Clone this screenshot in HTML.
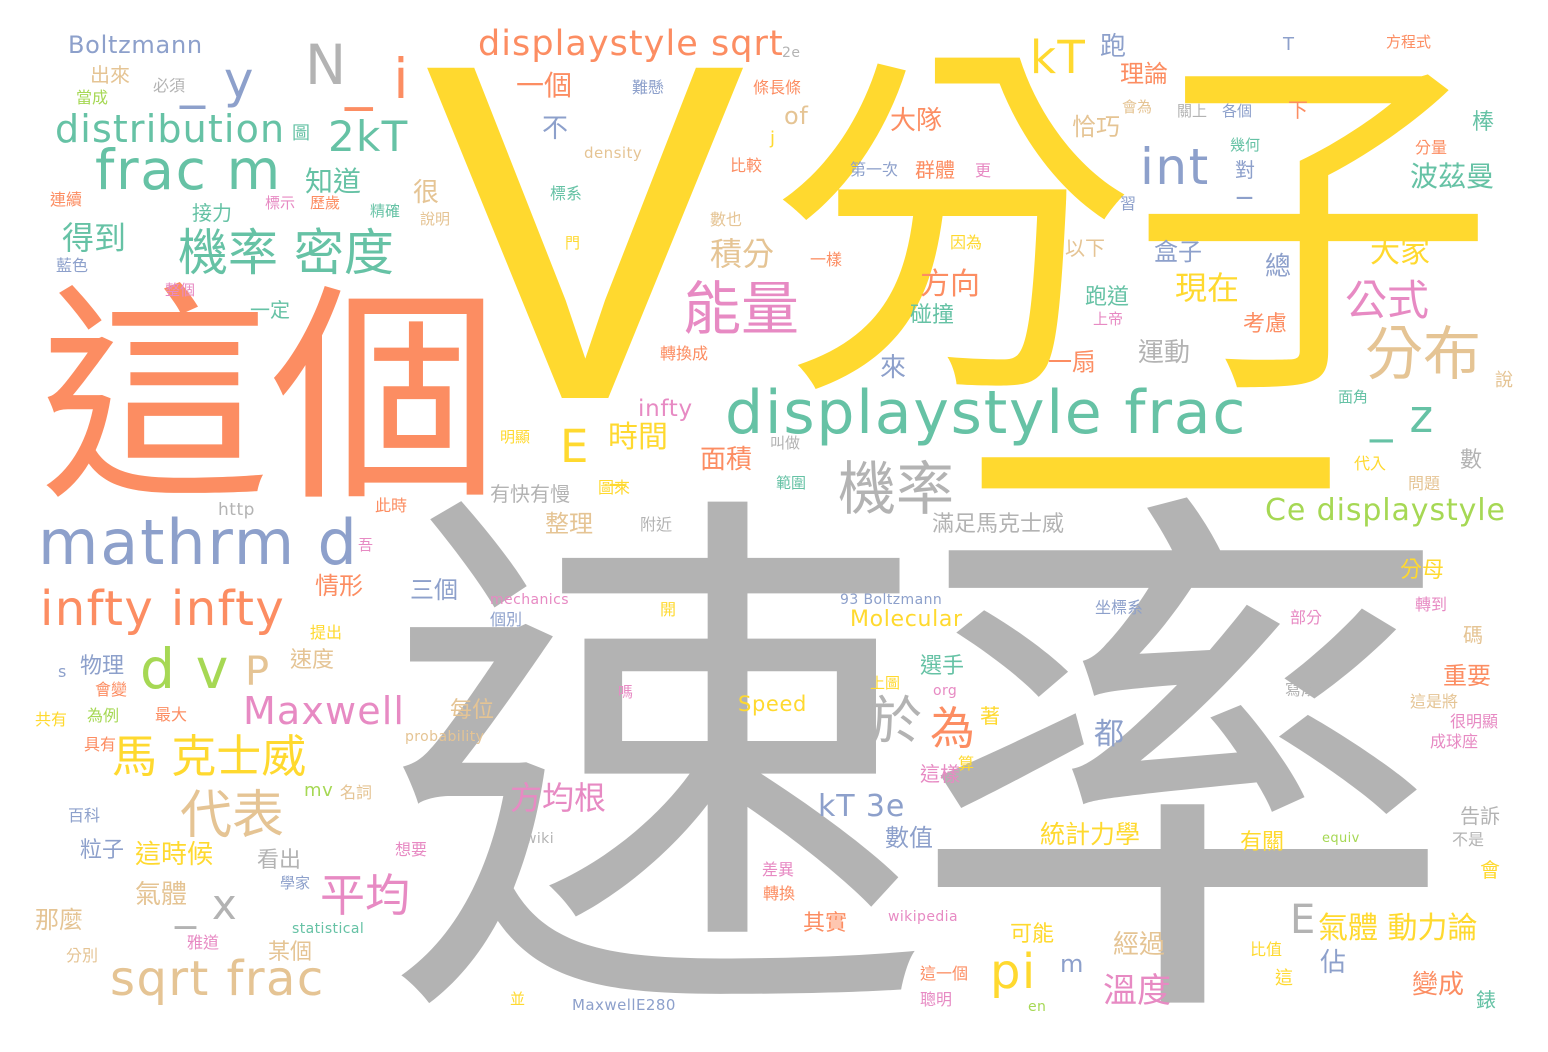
<!DOCTYPE html>
<html><head><meta charset="utf-8"><style>
html,body{margin:0;padding:0;background:#fff}
#c{position:relative;width:1548px;height:1052px;overflow:hidden;background:#fff;font-family:"DejaVu Sans","Noto Sans CJK TC",sans-serif}
#c span{position:absolute;white-space:nowrap;line-height:1}
.lat{letter-spacing:0.03em}
.y{color:#FFD92F}.o{color:#FC8D62}.g{color:#B3B3B3}.gr{color:#66C2A5}.b{color:#8DA0CB}.p{color:#E78AC3}.l{color:#A6D854}.t{color:#E5C494}
</style></head><body><div id="c">
<span class="y" style="left:425px;top:-8px;font-size:480px;font-family:'Liberation Sans',sans-serif">V</span>
<span class="y" style="left:770px;top:50px;font-size:365px;letter-spacing:-5px">分子</span>
<span class="y" style="left:965px;top:300px;font-size:380px">一</span>
<span class="g" style="left:385px;top:498px;font-size:545px;letter-spacing:-20px">速率</span>
<span class="o" style="left:40px;top:285px;font-size:230px">這個</span>

<span class="gr lat" style="left:725px;top:383px;font-size:60px">displaystyle frac</span>
<span class="b lat" style="left:38px;top:512px;font-size:62px">mathrm d</span>
<span class="o lat" style="left:40px;top:585px;font-size:48px">infty infty</span>
<span class="t lat" style="left:110px;top:955px;font-size:48px">sqrt frac</span>
<span class="gr lat" style="left:95px;top:143px;font-size:55px">frac m</span>
<span class="gr lat" style="left:55px;top:110px;font-size:38px">distribution</span>
<span class="b lat" style="left:68px;top:33px;font-size:24px">Boltzmann</span>
<span class="o lat" style="left:478px;top:27px;font-size:35px">displaystyle sqrt</span>
<span class="g lat" style="left:305px;top:38px;font-size:55px">N</span>
<span class="o lat" style="left:345px;top:52px;font-size:55px">_ i</span>
<span class="b lat" style="left:180px;top:55px;font-size:50px">_ y</span>
<span class="gr lat" style="left:328px;top:116px;font-size:42px">2kT</span>
<span class="y lat" style="left:1030px;top:35px;font-size:45px">kT</span>
<span class="b lat" style="left:1140px;top:142px;font-size:50px">int</span>
<span class="b" style="left:1237px;top:168px;font-size:30px">_</span>
<span class="gr" style="left:178px;top:228px;font-size:50px">機率 密度</span>
<span class="p" style="left:683px;top:280px;font-size:58px">能量</span>
<span class="t" style="left:1365px;top:325px;font-size:58px">分布</span>
<span class="p" style="left:1345px;top:280px;font-size:42px">公式</span>
<span class="g" style="left:838px;top:460px;font-size:58px">機率</span>
<span class="gr lat" style="left:1370px;top:394px;font-size:45px">_ z</span>
<span class="y lat" style="left:560px;top:424px;font-size:45px">E</span>
<span class="y" style="left:610px;top:455px;font-size:30px">_</span>
<span class="y" style="left:608px;top:423px;font-size:30px">時間</span>
<span class="l lat" style="left:140px;top:642px;font-size:55px">d v</span>
<span class="t lat" style="left:245px;top:652px;font-size:40px">P</span>
<span class="p lat" style="left:243px;top:692px;font-size:38px">Maxwell</span>
<span class="y" style="left:112px;top:734px;font-size:45px">馬 克士威</span>
<span class="t" style="left:180px;top:790px;font-size:52px">代表</span>
<span class="p" style="left:320px;top:873px;font-size:45px">平均</span>
<span class="g lat" style="left:175px;top:884px;font-size:42px">_ x</span>
<span class="g" style="left:870px;top:696px;font-size:52px">於</span>
<span class="o" style="left:930px;top:706px;font-size:45px">為</span>
<span class="y lat" style="left:990px;top:948px;font-size:48px">pi</span>
<span class="l lat" style="left:1265px;top:496px;font-size:30px">Ce displaystyle</span>
<span class="y lat" style="left:850px;top:609px;font-size:22px">Molecular</span>
<span class="y lat" style="left:738px;top:694px;font-size:21px">Speed</span>
<span class="b lat" style="left:818px;top:792px;font-size:30px">kT 3e</span>
<span class="p" style="left:510px;top:782px;font-size:32px">方均根</span>
<span class="p" style="left:1103px;top:974px;font-size:34px">溫度</span>
<span class="y" style="left:1318px;top:914px;font-size:30px">氣體 動力論</span>
<span class="y" style="left:1040px;top:822px;font-size:25px">統計力學</span>
<span class="t" style="left:710px;top:238px;font-size:32px">積分</span>
<span class="o" style="left:920px;top:270px;font-size:30px">方向</span>
<span class="y" style="left:1175px;top:272px;font-size:32px">現在</span>
<span class="y" style="left:1370px;top:238px;font-size:30px">大家</span>
<span class="gr" style="left:1410px;top:163px;font-size:28px">波茲曼</span>
<span class="p lat" style="left:638px;top:398px;font-size:23px">infty</span>
<span class="o" style="left:700px;top:447px;font-size:26px">面積</span>
<span class="g" style="left:1138px;top:340px;font-size:26px">運動</span>
<span class="o" style="left:1048px;top:350px;font-size:24px">一扇</span>
<span class="o" style="left:890px;top:108px;font-size:26px">大隊</span>
<span class="o" style="left:516px;top:72px;font-size:28px">一個</span>
<span class="t lat" style="left:784px;top:104px;font-size:24px">of</span>
<span class="gr" style="left:62px;top:222px;font-size:32px">得到</span>
<span class="gr" style="left:305px;top:168px;font-size:28px">知道</span>
<span class="t" style="left:413px;top:180px;font-size:26px">很</span>
<span class="b" style="left:542px;top:116px;font-size:26px">不</span>
<span class="o" style="left:1120px;top:62px;font-size:24px">理論</span>
<span class="b" style="left:1100px;top:34px;font-size:26px">跑</span>
<span class="t" style="left:1072px;top:115px;font-size:24px">恰巧</span>
<span class="b" style="left:1154px;top:240px;font-size:24px">盒子</span>
<span class="gr" style="left:1085px;top:287px;font-size:22px">跑道</span>
<span class="b" style="left:1265px;top:254px;font-size:26px">總</span>
<span class="gr" style="left:910px;top:305px;font-size:22px">碰撞</span>
<span class="b" style="left:880px;top:355px;font-size:26px">來</span>
<span class="o" style="left:1243px;top:314px;font-size:22px">考慮</span>
<span class="t" style="left:1065px;top:238px;font-size:20px">以下</span>
<span class="b" style="left:1094px;top:720px;font-size:30px">都</span>
<span class="t" style="left:545px;top:512px;font-size:24px">整理</span>
<span class="g" style="left:490px;top:484px;font-size:20px">有快有慢</span>
<span class="g" style="left:932px;top:514px;font-size:22px">滿足馬克士威</span>
<span class="b" style="left:410px;top:578px;font-size:24px">三個</span>
<span class="o" style="left:315px;top:574px;font-size:24px">情形</span>
<span class="t" style="left:290px;top:650px;font-size:22px">速度</span>
<span class="t" style="left:450px;top:700px;font-size:22px">每位</span>
<span class="gr" style="left:920px;top:656px;font-size:22px">選手</span>
<span class="y" style="left:1400px;top:560px;font-size:22px">分母</span>
<span class="o" style="left:1443px;top:664px;font-size:24px">重要</span>
<span class="p" style="left:920px;top:764px;font-size:20px">這樣</span>
<span class="b" style="left:885px;top:826px;font-size:24px">數值</span>
<span class="b" style="left:80px;top:840px;font-size:22px">粒子</span>
<span class="y" style="left:135px;top:842px;font-size:26px">這時候</span>
<span class="t" style="left:135px;top:882px;font-size:26px">氣體</span>
<span class="g" style="left:257px;top:850px;font-size:22px">看出</span>
<span class="t" style="left:268px;top:942px;font-size:22px">某個</span>
<span class="t" style="left:35px;top:908px;font-size:24px">那麼</span>
<span class="b" style="left:80px;top:656px;font-size:22px">物理</span>
<span class="l lat" style="left:304px;top:782px;font-size:18px">mv</span>
<span class="y" style="left:1240px;top:832px;font-size:22px">有關</span>
<span class="y" style="left:1010px;top:924px;font-size:22px">可能</span>
<span class="b lat" style="left:1060px;top:952px;font-size:24px">m</span>
<span class="t" style="left:1113px;top:932px;font-size:26px">經過</span>
<span class="g lat" style="left:1290px;top:900px;font-size:40px">E</span>
<span class="b" style="left:1320px;top:950px;font-size:26px">佔</span>
<span class="o" style="left:1412px;top:972px;font-size:26px">變成</span>
<span class="o" style="left:803px;top:913px;font-size:22px">其實</span>
<span class="g" style="left:1460px;top:806px;font-size:20px">告訴</span>
<span class="t lat" style="left:584px;top:146px;font-size:15px">density</span>
<span class="g lat" style="left:218px;top:502px;font-size:17px">http</span>
<span class="p lat" style="left:490px;top:593px;font-size:14px">mechanics</span>
<span class="b lat" style="left:840px;top:593px;font-size:14px">93 Boltzmann</span>
<span class="t lat" style="left:405px;top:730px;font-size:14px">probability</span>
<span class="gr lat" style="left:292px;top:922px;font-size:14px">statistical</span>
<span class="p lat" style="left:888px;top:910px;font-size:14px">wikipedia</span>
<span class="b lat" style="left:572px;top:998px;font-size:15px">MaxwellE280</span>
<span class="g lat" style="left:525px;top:832px;font-size:14px">wiki</span>
<span class="l lat" style="left:1322px;top:832px;font-size:13px">equiv</span>
<span class="b lat" style="left:1283px;top:36px;font-size:18px">T</span>
<span class="o" style="left:1386px;top:35px;font-size:15px">方程式</span>
<span class="g lat" style="left:782px;top:46px;font-size:14px">2e</span>
<span class="t" style="left:90px;top:65px;font-size:20px">出來</span>
<span class="g" style="left:153px;top:78px;font-size:16px">必須</span>
<span class="l" style="left:76px;top:90px;font-size:16px">當成</span>
<span class="b" style="left:632px;top:80px;font-size:16px">難懸</span>
<span class="o" style="left:753px;top:80px;font-size:16px">條長條</span>
<span class="o" style="left:1415px;top:140px;font-size:16px">分量</span>
<span class="o" style="left:1288px;top:100px;font-size:20px">下</span>
<span class="gr" style="left:1472px;top:112px;font-size:22px">棒</span>
<span class="o" style="left:50px;top:192px;font-size:16px">連續</span>
<span class="gr" style="left:192px;top:203px;font-size:20px">接力</span>
<span class="b" style="left:56px;top:258px;font-size:16px">藍色</span>
<span class="gr" style="left:250px;top:300px;font-size:20px">一定</span>
<span class="p" style="left:165px;top:283px;font-size:15px">整個</span>
<span class="o" style="left:915px;top:160px;font-size:20px">群體</span>
<span class="b" style="left:850px;top:162px;font-size:16px">第一次</span>
<span class="gr" style="left:550px;top:186px;font-size:16px">標系</span>
<span class="t" style="left:710px;top:212px;font-size:16px">數也</span>
<span class="t" style="left:1495px;top:372px;font-size:18px">說</span>
<span class="gr" style="left:1338px;top:390px;font-size:15px">面角</span>
<span class="y" style="left:1354px;top:456px;font-size:16px">代入</span>
<span class="t" style="left:1408px;top:476px;font-size:16px">問題</span>
<span class="g" style="left:1460px;top:450px;font-size:22px">數</span>
<span class="b" style="left:1095px;top:600px;font-size:16px">坐標系</span>
<span class="p" style="left:1415px;top:597px;font-size:16px">轉到</span>
<span class="p" style="left:1290px;top:610px;font-size:16px">部分</span>
<span class="t" style="left:1463px;top:625px;font-size:20px">碼</span>
<span class="g" style="left:1285px;top:682px;font-size:16px">寫成</span>
<span class="t" style="left:1410px;top:694px;font-size:16px">這是將</span>
<span class="p" style="left:1450px;top:714px;font-size:16px">很明顯</span>
<span class="p" style="left:1430px;top:734px;font-size:16px">成球座</span>
<span class="g" style="left:1452px;top:832px;font-size:16px">不是</span>
<span class="y" style="left:1480px;top:860px;font-size:20px">會</span>
<span class="y" style="left:1250px;top:942px;font-size:16px">比值</span>
<span class="y" style="left:1275px;top:970px;font-size:18px">這</span>
<span class="gr" style="left:1476px;top:990px;font-size:20px">錶</span>
<span class="l lat" style="left:1028px;top:1000px;font-size:14px">en</span>
<span class="o" style="left:920px;top:966px;font-size:16px">這一個</span>
<span class="p" style="left:920px;top:992px;font-size:16px">聰明</span>
<span class="y" style="left:510px;top:992px;font-size:15px">並</span>
<span class="t" style="left:66px;top:948px;font-size:16px">分別</span>
<span class="p" style="left:187px;top:935px;font-size:16px">雅道</span>
<span class="b" style="left:280px;top:876px;font-size:15px">學家</span>
<span class="p" style="left:395px;top:842px;font-size:16px">想要</span>
<span class="b" style="left:68px;top:808px;font-size:16px">百科</span>
<span class="t" style="left:340px;top:785px;font-size:16px">名詞</span>
<span class="o" style="left:84px;top:737px;font-size:16px">具有</span>
<span class="y" style="left:35px;top:712px;font-size:16px">共有</span>
<span class="l" style="left:87px;top:708px;font-size:16px">為例</span>
<span class="o" style="left:155px;top:707px;font-size:16px">最大</span>
<span class="b lat" style="left:58px;top:664px;font-size:16px">s</span>
<span class="o" style="left:95px;top:682px;font-size:16px">會變</span>
<span class="y" style="left:310px;top:625px;font-size:16px">提出</span>
<span class="p" style="left:358px;top:538px;font-size:15px">吾</span>
<span class="o" style="left:375px;top:498px;font-size:16px">此時</span>
<span class="y" style="left:598px;top:480px;font-size:16px">圖來</span>
<span class="g" style="left:640px;top:517px;font-size:16px">附近</span>
<span class="b" style="left:490px;top:612px;font-size:16px">個別</span>
<span class="y" style="left:660px;top:602px;font-size:16px">開</span>
<span class="p" style="left:618px;top:685px;font-size:15px">嗎</span>
<span class="y" style="left:870px;top:676px;font-size:15px">上圖</span>
<span class="p lat" style="left:933px;top:684px;font-size:14px">org</span>
<span class="y" style="left:980px;top:706px;font-size:20px">著</span>
<span class="y" style="left:958px;top:756px;font-size:16px">算</span>
<span class="p" style="left:762px;top:862px;font-size:16px">差異</span>
<span class="o" style="left:763px;top:886px;font-size:16px">轉換</span>
<span class="y" style="left:500px;top:430px;font-size:15px">明顯</span>
<span class="g" style="left:770px;top:436px;font-size:15px">叫做</span>
<span class="gr" style="left:776px;top:476px;font-size:15px">範圍</span>
<span class="o" style="left:660px;top:346px;font-size:16px">轉換成</span>
<span class="o" style="left:810px;top:252px;font-size:16px">一樣</span>
<span class="p" style="left:1093px;top:312px;font-size:15px">上帝</span>
<span class="y" style="left:950px;top:235px;font-size:16px">因為</span>
<span class="y" style="left:565px;top:236px;font-size:15px">門</span>
<span class="o" style="left:730px;top:158px;font-size:16px">比較</span>
<span class="y lat" style="left:770px;top:130px;font-size:18px">j</span>
<span class="p" style="left:975px;top:163px;font-size:16px">更</span>
<span class="gr" style="left:1230px;top:138px;font-size:15px">幾何</span>
<span class="b" style="left:1235px;top:160px;font-size:20px">對</span>
<span class="b" style="left:1120px;top:196px;font-size:16px">習</span>
<span class="t" style="left:1122px;top:100px;font-size:15px">會為</span>
<span class="g" style="left:1177px;top:104px;font-size:15px">關上</span>
<span class="b" style="left:1222px;top:104px;font-size:15px">各個</span>
<span class="p" style="left:265px;top:196px;font-size:15px">標示</span>
<span class="o" style="left:310px;top:196px;font-size:15px">歷歲</span>
<span class="gr" style="left:370px;top:204px;font-size:15px">精確</span>
<span class="t" style="left:420px;top:212px;font-size:15px">說明</span>
<span class="gr" style="left:292px;top:125px;font-size:18px">圖</span>
</div></body></html>
